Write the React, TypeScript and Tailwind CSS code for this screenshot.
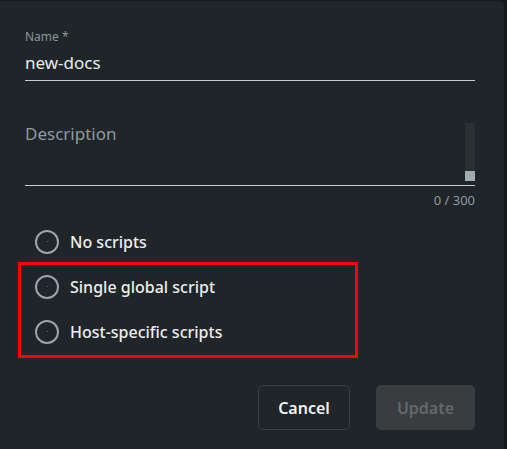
import React, { useState } from 'react'

const options = ['No scripts', 'Single global script', 'Host-specific scripts']

function Radio({ label }: { label: string }) {
    return (
        <label className="flex items-center h-[45px] cursor-pointer">
            <span className="w-[24px] h-[24px] rounded-full border-2 border-[#9aa5ab] flex items-center justify-center ml-[12px]">
                <span className="w-[1px] h-[1px] bg-[#2a8a7a]" />
            </span>
            <span className="ml-[11px] text-[16px] font-medium text-[#eceeef]">{label}</span>
        </label>
    )
}

export default function App() {
    const [desc, setDesc] = useState('')

    return (
        <div className="w-[507px] h-[449px] bg-[#15191b] flex" style={{ fontFamily: '"Noto Sans", "Open Sans", sans-serif' }}>
            <div className="w-[504px] h-full bg-[#1f2528] rounded-tr-[6px] border-t border-[#161a1c] pl-[25px] pr-[29px] pt-[28px] flex flex-col">
                {/* Name */}
                <div className="text-[12px] leading-[16px] text-[#89969c]">Name *</div>
                <div className="text-[17px] leading-[26px] text-[#e9ebec] mt-[5px] pb-[4px] border-b border-[#c9cccd]">new-docs</div>

                {/* Description */}
                <div className="mt-[42px] flex border-b border-[#c9cccd] h-[63px]">
                    <textarea
                        value={desc}
                        onChange={(e) => setDesc(e.target.value)}
                        placeholder="Description"
                        className="flex-1 resize-none outline-none bg-transparent text-[17px] leading-[26px] text-[#e9ebec] placeholder:text-[#8d9aa1] -mt-[2px]"
                    />
                    <div className="w-[10px] h-[58px] bg-[#2a2f32] flex flex-col justify-end">
                        <div className="h-[10px] bg-[#9eacb4]" />
                    </div>
                </div>
                <div className="text-right text-[13px] leading-[18px] text-[#8d9aa1] mt-[5px]">{desc.length} / 300</div>

                {/* Scripts */}
                <div className="relative mt-[10px] -ml-[2px]">
                    {options.map((o) => (
                        <Radio key={o} label={o} />
                    ))}
                    <div className="absolute left-[-5px] top-[43px] w-[340px] h-[96px] border-[3px] border-[#ff0000]" />
                </div>

                {/* Actions */}
                <div className="mt-auto mb-[19px] flex justify-end gap-[26px]">
                    <button className="w-[92px] h-[45px] rounded-[5px] border border-[#3b4043] text-[16px] font-semibold text-[#f1f2f3]">Cancel</button>
                    <button disabled className="w-[99px] h-[45px] rounded-[5px] bg-[#393d40] text-[16px] font-semibold text-[#63686b]">Update</button>
                </div>
            </div>
        </div>
    )
}
